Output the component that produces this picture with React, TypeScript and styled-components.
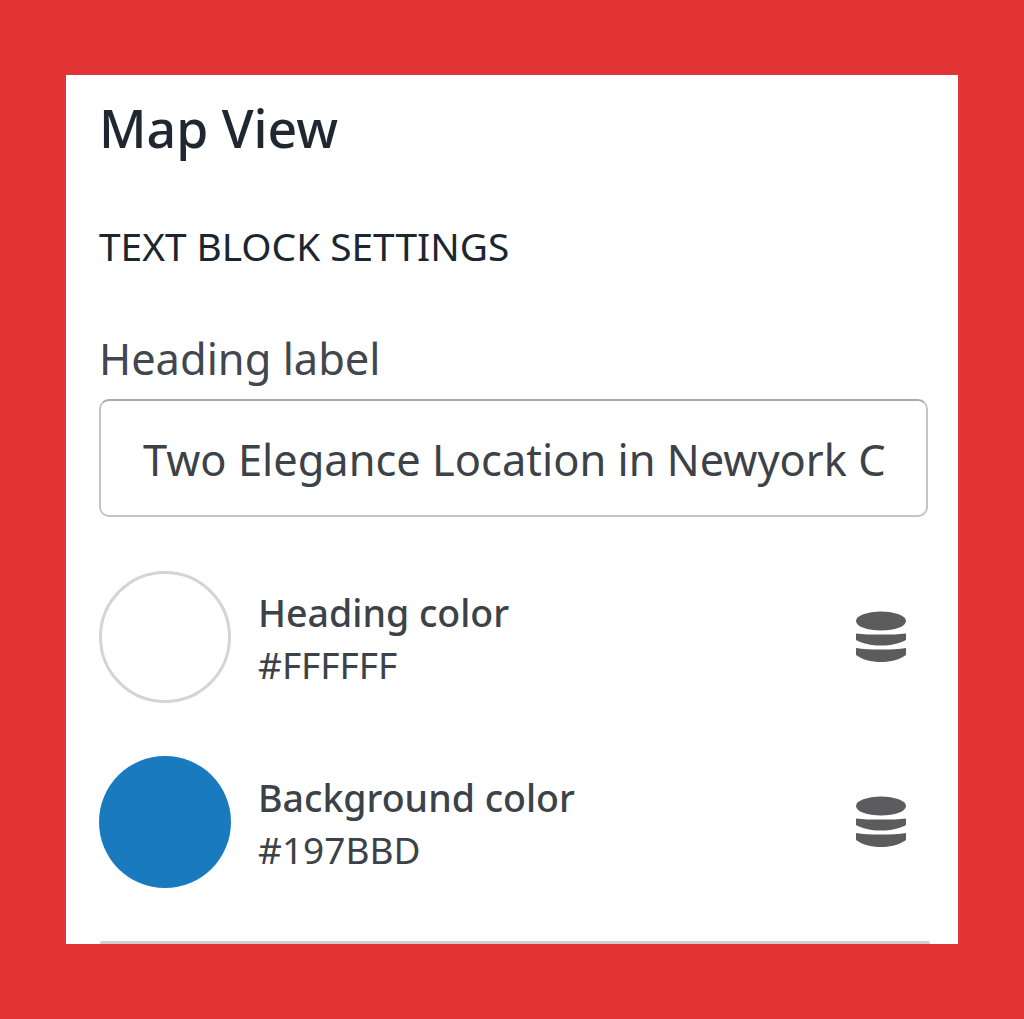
import React from 'react';
import styled, { createGlobalStyle } from 'styled-components';

const GlobalStyle = createGlobalStyle`
  html, body {
    margin: 0;
    padding: 0;
    background: #e23335;
  }
  * {
    box-sizing: border-box;
  }
`;

const swatches = [
  { label: 'Heading color', value: '#FFFFFF', fill: '#ffffff', outlined: true },
  { label: 'Background color', value: '#197BBD', fill: '#197bbd', outlined: false },
];

const LayersIcon = () => (
  <svg width="52" height="52" viewBox="0 0 52 52" fill="#5c5c5f">
    <ellipse cx="26" cy="10" rx="25" ry="9.5" />
    <path d="M1 22.5C8 23.5 16 23.5 26 23.5S44 23.5 51 22.5V29C45 32.5 36 34.5 26 34.5S7 32.5 1 29Z" />
    <path d="M1 37C8 38 16 38.5 26 38.5S44 38 51 37V44C45 48.5 36 51 26 51S7 48.5 1 44Z" />
  </svg>
);

const App: React.FC = () => {
  return (
    <Page>
      <GlobalStyle />
      <Panel>
        <Title>Map View</Title>
        <SectionTitle>TEXT BLOCK SETTINGS</SectionTitle>
        <FieldLabel htmlFor="heading-label">Heading label</FieldLabel>
        <TextField
          id="heading-label"
          type="text"
          readOnly
          value="Two Elegance Location in Newyork City"
        />
        <SwatchList>
          {swatches.map((swatch) => (
            <SwatchRow key={swatch.label}>
              <Circle $fill={swatch.fill} $outlined={swatch.outlined} />
              <SwatchText>
                <SwatchName>{swatch.label}</SwatchName>
                <SwatchValue>{swatch.value}</SwatchValue>
              </SwatchText>
              <IconSlot>
                <LayersIcon />
              </IconSlot>
            </SwatchRow>
          ))}
        </SwatchList>
        <Divider />
      </Panel>
    </Page>
  );
};

export default App;

const Page = styled.div`
  width: 1024px;
  height: 1019px;
  padding: 75px 66px;
  background: #e23335;
  overflow: hidden;
  font-family: 'Noto Sans', 'Open Sans', sans-serif;
`;

const Panel = styled.div`
  display: flex;
  flex-direction: column;
  width: 892px;
  height: 869px;
  padding: 21px 30px 0 33px;
  background: #ffffff;
`;

const Title = styled.h1`
  margin: 0;
  font-size: 51.8px;
  line-height: 64px;
  font-weight: 500;
  color: #1f2831;
`;

const SectionTitle = styled.h2`
  margin: 62px 0 0;
  font-size: 38.8px;
  line-height: 48px;
  font-weight: 400;
  color: #1c2630;
`;

const FieldLabel = styled.label`
  display: block;
  margin-top: 62px;
  font-size: 43.4px;
  line-height: 54px;
  color: #41474d;
`;

const TextField = styled.input`
  display: block;
  width: 100%;
  height: 118px;
  margin-top: 13px;
  padding: 2px 41px 0 42px;
  border: 2px solid #c4c4c4;
  border-top-color: #aaaaaa;
  border-radius: 10px;
  background: #ffffff;
  outline: none;
  font-family: inherit;
  font-size: 43.4px;
  color: #3c4248;
`;

const SwatchList = styled.div`
  display: flex;
  flex-direction: column;
  gap: 53px;
  margin-top: 54px;
`;

const SwatchRow = styled.div`
  display: flex;
  align-items: center;
  height: 132px;
`;

const Circle = styled.div<{ $fill: string; $outlined: boolean }>`
  flex: none;
  width: 132px;
  height: 132px;
  border-radius: 50%;
  background: ${(p) => p.$fill};
  border: ${(p) => (p.$outlined ? '3px solid #d6d3d2' : 'none')};
`;

const SwatchText = styled.div`
  flex: 1;
  margin-left: 27px;
  padding-top: 3px;
`;

const SwatchName = styled.div`
  font-size: 37.5px;
  line-height: 52px;
  font-weight: 500;
  color: #3c4248;
`;

const SwatchValue = styled.div`
  font-size: 37px;
  line-height: 52px;
  color: #3c4248;
`;

const IconSlot = styled.div`
  display: flex;
  margin-right: 21px;
`;

const Divider = styled.div`
  height: 3px;
  margin-top: auto;
  margin-right: -2px;
  margin-left: 1px;
  border-radius: 2px 2px 0 0;
  background: #cfcfcf;
`;
